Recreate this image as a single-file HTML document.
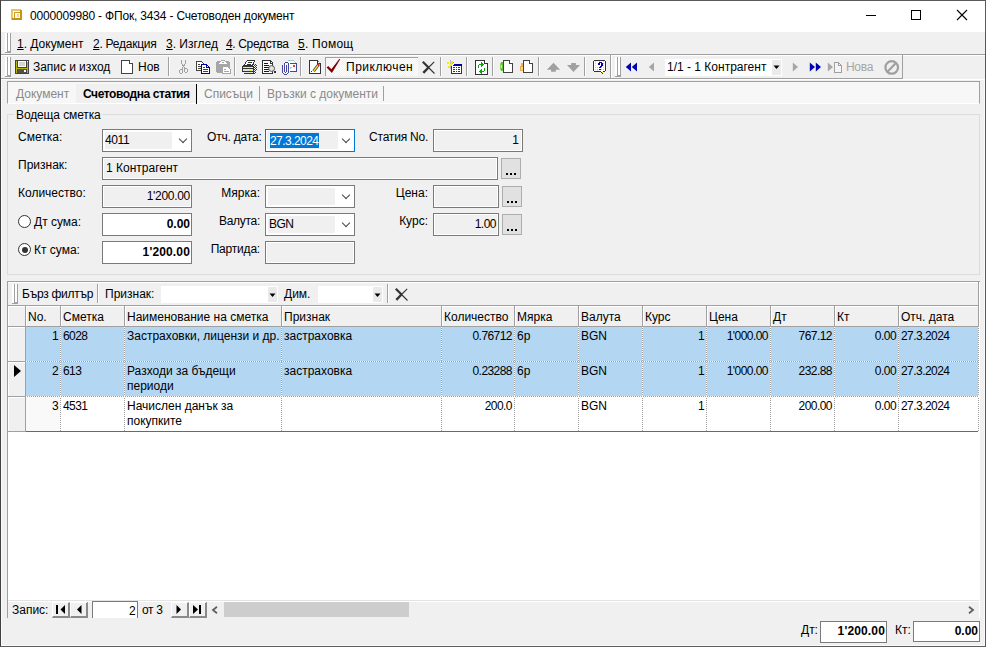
<!DOCTYPE html>
<html><head><meta charset="utf-8">
<style>
*{margin:0;padding:0;box-sizing:border-box}
html,body{width:986px;height:647px;overflow:hidden;background:#f0f0f0}
body{position:relative;font:12px/14px "Liberation Sans",sans-serif;color:#000}
.a{position:absolute}
.t{position:absolute;white-space:pre;line-height:14px}
.hl{position:absolute;height:1px}
.vl{position:absolute;width:1px}
.box{position:absolute;border:1px solid #7a7a7a;background:#fff}
.dis{position:absolute;border:1px solid #7a7a7a;background:#f0f0f0;box-shadow:inset 0 0 0 1px #fff}
.sep{position:absolute;width:2px;top:57px;height:19px;border-left:1px solid #a0a0a0;border-right:1px solid #fff}
.grip{position:absolute;width:6px;}
.grip:before{content:"";position:absolute;left:0;top:0;bottom:0;width:2px;background:#fff;border-right:1px solid #a0a0a0;width:3px;box-sizing:border-box}
.grip:after{content:"";position:absolute;left:3px;top:0;bottom:0;width:3px;background:#fff;border-right:1px solid #a0a0a0;box-sizing:border-box;border-bottom:1px solid #a0a0a0}
.grip{border-bottom:1px solid #a0a0a0}
.ell{position:absolute;width:20px;height:21px;border:1px solid #adadad;background:#e1e1e1;}
.ell:after{content:"";position:absolute;left:4px;top:14px;width:2px;height:2px;background:#000;box-shadow:4px 0 #000,8px 0 #000}
.n{letter-spacing:-0.55px}
.dot-h{background:repeating-linear-gradient(90deg,#fff 0 1px,#a0a0a0 1px 2px)}
.dot-v{background:repeating-linear-gradient(180deg,#a0a0a0 0 1px,#fff 1px 2px)}
.dot-v2{background:repeating-linear-gradient(180deg,#fff 0 1px,#a0a0a0 1px 2px)}
.nb{position:absolute;top:602px;width:18px;height:16px;border-left:1px solid #fff;border-top:1px solid #fff;border-right:2px solid #8a8a8a;border-bottom:2px solid #8a8a8a;background:#f0f0f0}
.chev{position:absolute;width:6px;height:6px;border-right:1px solid #444;border-bottom:1px solid #444;transform:rotate(45deg)}
</style></head><body>
<!-- window frame -->
<div class="a" style="left:0;top:0;width:986px;height:647px;border:1px solid #404040;border-top-color:#5a5a5a;border-right-color:#595959;border-bottom-color:#5e5e5e"></div>
<div class="vl" style="left:1px;top:32px;height:614px;background:#fafafa"></div>
<div class="vl" style="left:984px;top:80px;height:566px;background:#fafafa"></div>
<div class="hl" style="left:1px;top:645px;width:984px;background:#fafafa"></div>
<!-- title bar -->
<div class="a" style="left:1px;top:1px;width:984px;height:31px;background:#fff"></div>
<svg class="a" style="left:11px;top:9px" width="12" height="12" shape-rendering="crispEdges">
<rect x="0" y="0" width="10" height="2" fill="#e4c46c"/>
<rect x="0" y="0" width="2" height="11" fill="#e4c46c"/>
<rect x="2" y="2" width="7" height="1" fill="#fff"/>
<rect x="2" y="2" width="1" height="8" fill="#fff"/>
<rect x="3" y="3" width="7" height="1" fill="#cc9c22"/>
<rect x="3" y="3" width="1" height="7" fill="#cc9c22"/>
<rect x="4" y="4" width="5" height="5" fill="#fff"/>
<rect x="6" y="5" width="2" height="3" fill="#ead296"/>
<rect x="9" y="1" width="2" height="10" fill="#c4920e"/>
<rect x="1" y="9" width="10" height="2" fill="#c4920e"/>
</svg>
<div class="t" style="left:30px;top:9px;letter-spacing:-0.18px">0000009980 - ФПок, 3434 - Счетоводен документ</div>
<div class="a" style="left:866px;top:15px;width:10px;height:1px;background:#000"></div>
<div class="a" style="left:911px;top:10px;width:10px;height:10px;border:1px solid #000"></div>
<svg class="a" style="left:956px;top:9px" width="12" height="12"><path d="M1 1L11 11M11 1L1 11" stroke="#000" stroke-width="1.1"/></svg>

<!-- menu bar -->
<div class="a" style="left:1px;top:32px;width:984px;height:22px;background:#f0f0f0"></div>
<div class="grip" style="left:5px;top:33px;height:20px"></div>
<div class="hl" style="left:1px;top:54px;width:984px;background:#a0a0a0"></div>
<div class="hl" style="left:1px;top:55px;width:984px;background:#fff"></div>
<div class="t" style="left:17px;top:37px;"><u>1</u>. Документ</div>
<div class="t" style="left:93px;top:37px;letter-spacing:-0.25px"><u>2</u>. Редакция</div>
<div class="t" style="left:166px;top:37px;"><u>3</u>. Изглед</div>
<div class="t" style="left:226px;top:37px;letter-spacing:-0.35px"><u>4</u>. Средства</div>
<div class="t" style="left:298px;top:37px;letter-spacing:0.25px"><u>5</u>. Помощ</div>


<!-- toolbar 1 -->
<div class="grip" style="left:5px;top:57px;height:20px"></div>
<svg class="a" style="left:15px;top:60px" width="14" height="14" shape-rendering="crispEdges">
<rect x="0" y="0" width="14" height="14" fill="#424242"/>
<rect x="1" y="1" width="1" height="12" fill="#b8b800"/>
<rect x="12" y="2" width="1" height="11" fill="#b8b800"/>
<rect x="12" y="1" width="1" height="1" fill="#fff"/>
<rect x="2" y="8" width="10" height="1" fill="#b8b800"/>
<rect x="3" y="1" width="8" height="6" fill="#fafafa"/>
<rect x="4" y="2" width="6" height="4" fill="#d4d4d4"/>
<rect x="3" y="9" width="8" height="4" fill="#505050"/>
<rect x="9" y="10" width="2" height="2" fill="#fafafa"/>
</svg>
<div class="t" style="left:33px;top:60px;letter-spacing:-0.05px">Запис и изход</div>
<svg class="a" style="left:121px;top:60px" width="13" height="14" shape-rendering="crispEdges">
<path d="M0.5 0.5H8.5L11.5 3.5V13.5H0.5Z" fill="#fff" stroke="#424242"/>
<path d="M8.5 0.5V3.5H11.5" fill="none" stroke="#424242"/>
<rect x="9" y="1" width="2" height="2" fill="#fff"/>
</svg>
<div class="t" style="left:138px;top:60px;">Нов</div>
<div class="sep" style="left:168px"></div>
<svg class="a" style="left:176px;top:58px" width="16" height="18" shape-rendering="crispEdges" fill="#a0a0a0"><rect x="5" y="2" width="1" height="1"/><rect x="5" y="3" width="1" height="1"/><rect x="5" y="4" width="1" height="1"/><rect x="5" y="5" width="1" height="1"/><rect x="6" y="6" width="1" height="1"/><rect x="6" y="7" width="1" height="1"/><rect x="7" y="7" width="1" height="1"/><rect x="9" y="2" width="1" height="1"/><rect x="9" y="3" width="1" height="1"/><rect x="9" y="4" width="1" height="1"/><rect x="9" y="5" width="1" height="1"/><rect x="8" y="6" width="1" height="1"/><rect x="8" y="7" width="1" height="1"/><rect x="7" y="8" width="1" height="1"/><rect x="6" y="9" width="1" height="1"/><rect x="8" y="9" width="1" height="1"/><rect x="4" y="11" width="1" height="1"/><rect x="5" y="11" width="1" height="1"/><rect x="3" y="12" width="1" height="1"/><rect x="3" y="13" width="1" height="1"/><rect x="3" y="14" width="1" height="1"/><rect x="6" y="10" width="1" height="1"/><rect x="6" y="11" width="1" height="1"/><rect x="6" y="12" width="1" height="1"/><rect x="6" y="13" width="1" height="1"/><rect x="6" y="14" width="1" height="1"/><rect x="4" y="15" width="1" height="1"/><rect x="5" y="15" width="1" height="1"/><rect x="8" y="10" width="1" height="1"/><rect x="8" y="11" width="1" height="1"/><rect x="8" y="12" width="1" height="1"/><rect x="8" y="13" width="1" height="1"/><rect x="9" y="10" width="1" height="1"/><rect x="10" y="10" width="1" height="1"/><rect x="11" y="11" width="1" height="1"/><rect x="11" y="12" width="1" height="1"/><rect x="11" y="13" width="1" height="1"/><rect x="9" y="14" width="1" height="1"/><rect x="10" y="14" width="1" height="1"/></svg>
<svg class="a" style="left:196px;top:61px" width="15" height="14" shape-rendering="crispEdges">
<path d="M0.5 0.5H5.5L7.5 2.5V9.5H0.5Z" fill="#fff" stroke="#424242"/>
<rect x="2" y="3" width="2" height="1" fill="#424242"/><rect x="2" y="5" width="3" height="1" fill="#424242"/><rect x="2" y="7" width="3" height="1" fill="#424242"/>
<path d="M5.5 3.5H10.5L13.5 6.5V12.5H5.5Z" fill="#fff" stroke="#0000a8" stroke-width="1.4"/>
<path d="M10.5 3.5V6.5H13.5" fill="none" stroke="#0000a8" stroke-width="1.4"/>
<rect x="11" y="5" width="1" height="1" fill="#fff"/>
<rect x="7" y="6" width="2" height="1" fill="#424242"/><rect x="7" y="8" width="5" height="1" fill="#424242"/><rect x="7" y="10" width="5" height="1" fill="#424242"/>
</svg>
<svg class="a" style="left:216px;top:60px" width="16" height="15" shape-rendering="crispEdges">
<path d="M1 1H13V2H14V12H13V13H1V12H0V2H1Z" fill="#a6a6a6"/>
<rect x="5" y="0" width="4" height="1" fill="#a6a6a6"/>
<path d="M5 1H9L11 4H3Z" fill="#fff"/>
<rect x="6" y="2" width="2" height="1" fill="#a6a6a6"/>
<path d="M6.5 6.5H11.5L14.5 9.5V13.5H6.5Z" fill="#fff" stroke="#a6a6a6"/>
<rect x="8" y="9" width="2" height="1" fill="#a6a6a6"/>
<rect x="8" y="11" width="5" height="1" fill="#a6a6a6"/>
</svg>
<div class="sep" style="left:234px"></div>
<svg class="a" style="left:240px;top:58px" width="17" height="17" shape-rendering="crispEdges">
<path d="M7 2H15V4H14V6H13V8H3V7H4V6H5V4H6V3H7Z" fill="#333"/>
<path d="M7 3H14V4H13V6H12V7H5V6H6V4H7Z" fill="#fff"/>
<rect x="8" y="4" width="4" height="1" fill="#333"/><rect x="7" y="6" width="4" height="1" fill="#333"/>
<rect x="2" y="8" width="12" height="8" fill="#333"/>
<rect x="3" y="9" width="10" height="1" fill="#e6e6e6"/>
<rect x="3" y="11" width="10" height="2" fill="#e0e0e0"/>
<rect x="9" y="12" width="2" height="1" fill="#f0f000"/>
<rect x="2" y="14" width="2" height="2" fill="#f0f0f0"/>
<rect x="4" y="14" width="9" height="1" fill="#e6e6e6"/>
<rect x="13" y="6" width="1" height="1" fill="#333"/><rect x="15" y="6" width="1" height="1" fill="#333"/><rect x="14" y="7" width="1" height="1" fill="#333"/><rect x="16" y="7" width="1" height="1" fill="#333"/><rect x="13" y="8" width="1" height="1" fill="#333"/><rect x="15" y="8" width="1" height="1" fill="#333"/><rect x="14" y="9" width="1" height="1" fill="#333"/><rect x="16" y="9" width="1" height="1" fill="#333"/><rect x="15" y="10" width="1" height="1" fill="#333"/><rect x="14" y="11" width="1" height="1" fill="#333"/><rect x="16" y="11" width="1" height="1" fill="#333"/><rect x="15" y="12" width="1" height="1" fill="#333"/><rect x="14" y="13" width="1" height="1" fill="#333"/><rect x="13" y="14" width="1" height="1" fill="#333"/><rect x="15" y="14" width="1" height="1" fill="#333"/><rect x="14" y="15" width="1" height="1" fill="#333"/><rect x="14" y="8" width="1" height="1" fill="#fff"/><rect x="15" y="9" width="1" height="1" fill="#fff"/><rect x="14" y="10" width="1" height="1" fill="#fff"/><rect x="15" y="11" width="1" height="1" fill="#fff"/><rect x="14" y="12" width="1" height="1" fill="#fff"/><rect x="14" y="14" width="1" height="1" fill="#fff"/>
</svg>
<svg class="a" style="left:260px;top:58px" width="17" height="17" shape-rendering="crispEdges">
<path d="M2.5 2.5H10.5L12.5 4.5V15.5H2.5Z" fill="#fff" stroke="#333"/>
<path d="M10.5 2.5V5.5H12.5" fill="none" stroke="#333"/>
<rect x="4" y="5" width="4" height="1" fill="#0000b4"/>
<rect x="4" y="7" width="5" height="1" fill="#0000b4"/>
<rect x="4" y="9" width="5" height="1" fill="#0000b4"/>
<rect x="4" y="11" width="5" height="1" fill="#0000b4"/>
<rect x="4" y="13" width="5" height="1" fill="#0000b4"/>
<circle cx="11.6" cy="10.5" r="2.9" fill="#e4e4e4" stroke="#444" stroke-width="0.9" shape-rendering="auto"/>
<rect x="14" y="13" width="2" height="2" fill="#333"/>
</svg>
<svg class="a" style="left:280px;top:58px" width="18" height="18" shape-rendering="crispEdges">
<rect x="9" y="3" width="7" height="10" fill="#fff"/>
<rect x="8" y="2" width="6" height="1" fill="#9cd0d0"/><rect x="14" y="3" width="1" height="1" fill="#9cd0d0"/><rect x="15" y="4" width="1" height="1" fill="#9cd0d0"/>
<rect x="10" y="5" width="7" height="1" fill="#4646a0"/><rect x="16" y="5" width="1" height="9" fill="#4646a0"/><rect x="10" y="13" width="7" height="1" fill="#4646a0"/>
<rect x="13" y="7" width="2" height="2" fill="#e84020"/>
<rect x="10" y="9" width="2" height="1" fill="#9cd0d0"/><rect x="10" y="10" width="1" height="1" fill="#9cd0d0"/>
<rect x="5" y="5" width="1" height="9" fill="#fff"/>
<rect x="2" y="7" width="1" height="1" fill="#4646a0"/><rect x="2" y="8" width="1" height="1" fill="#4646a0"/><rect x="2" y="9" width="1" height="1" fill="#4646a0"/><rect x="2" y="10" width="1" height="1" fill="#4646a0"/><rect x="2" y="11" width="1" height="1" fill="#4646a0"/><rect x="2" y="12" width="1" height="1" fill="#4646a0"/><rect x="2" y="13" width="1" height="1" fill="#4646a0"/><rect x="2" y="14" width="1" height="1" fill="#4646a0"/><rect x="3" y="15" width="1" height="1" fill="#4646a0"/><rect x="4" y="16" width="1" height="1" fill="#4646a0"/><rect x="5" y="16" width="1" height="1" fill="#4646a0"/><rect x="6" y="16" width="1" height="1" fill="#4646a0"/><rect x="7" y="15" width="1" height="1" fill="#4646a0"/><rect x="8" y="5" width="1" height="1" fill="#4646a0"/><rect x="8" y="6" width="1" height="1" fill="#4646a0"/><rect x="8" y="7" width="1" height="1" fill="#4646a0"/><rect x="8" y="8" width="1" height="1" fill="#4646a0"/><rect x="8" y="9" width="1" height="1" fill="#4646a0"/><rect x="8" y="10" width="1" height="1" fill="#4646a0"/><rect x="8" y="11" width="1" height="1" fill="#4646a0"/><rect x="8" y="12" width="1" height="1" fill="#4646a0"/><rect x="8" y="13" width="1" height="1" fill="#4646a0"/><rect x="8" y="14" width="1" height="1" fill="#4646a0"/><rect x="5" y="4" width="1" height="1" fill="#4646a0"/><rect x="6" y="4" width="1" height="1" fill="#4646a0"/><rect x="7" y="4" width="1" height="1" fill="#4646a0"/><rect x="4" y="5" width="1" height="1" fill="#4646a0"/><rect x="4" y="6" width="1" height="1" fill="#4646a0"/><rect x="4" y="7" width="1" height="1" fill="#4646a0"/><rect x="4" y="8" width="1" height="1" fill="#4646a0"/><rect x="4" y="9" width="1" height="1" fill="#4646a0"/><rect x="4" y="10" width="1" height="1" fill="#4646a0"/><rect x="4" y="11" width="1" height="1" fill="#4646a0"/><rect x="4" y="12" width="1" height="1" fill="#4646a0"/><rect x="4" y="13" width="1" height="1" fill="#4646a0"/><rect x="5" y="14" width="1" height="1" fill="#4646a0"/><rect x="6" y="7" width="1" height="1" fill="#4646a0"/><rect x="6" y="8" width="1" height="1" fill="#4646a0"/><rect x="6" y="9" width="1" height="1" fill="#4646a0"/><rect x="6" y="10" width="1" height="1" fill="#4646a0"/><rect x="6" y="11" width="1" height="1" fill="#4646a0"/><rect x="6" y="12" width="1" height="1" fill="#4646a0"/><rect x="6" y="13" width="1" height="1" fill="#4646a0"/>
</svg>
<div class="sep" style="left:300px"></div>
<svg class="a" style="left:309px;top:60px" width="13" height="14">
<path d="M0.5 0.5H8.5L11.5 3.5V13.5H0.5Z" fill="#fff" stroke="#333" shape-rendering="crispEdges"/>
<path d="M8.5 0.5V3.5H11.5" fill="none" stroke="#333" shape-rendering="crispEdges"/>
<circle cx="10" cy="2.3" r="0.9" fill="#fff"/>
<path d="M4.6 11.2L9.6 4.6" stroke="#4a4a5a" stroke-width="3"/>
<path d="M4.8 10.8L9.2 5.2" stroke="#ffee00" stroke-width="1.3"/>
<path d="M8.9 5.4L10.2 3.8" stroke="#e02020" stroke-width="1.6"/>
<rect x="2" y="11" width="1" height="1" fill="#333"/>
</svg>
<div class="a" style="left:325px;top:57px;width:93px;height:19px;border-top:1px solid #a0a0a0;border-left:1px solid #a0a0a0;background-color:#fafafa;background-image:repeating-conic-gradient(#f0f0f0 0 25%,#fff 0 50%);background-size:2px 2px"></div>
<svg class="a" style="left:326px;top:59px" width="15" height="15">
<path d="M0.6 8.6L2.2 7.1L5.4 10.3L13.4 -0.2L14.1 0.5L5.9 13.9Z" fill="#800000"/>
</svg>
<div class="t" style="left:346px;top:60px;letter-spacing:0.5px">Приключен</div>
<svg class="a" style="left:421px;top:60px" width="15" height="15"><path d="M1.8 1.8L7.5 7.5" stroke="#333" stroke-width="2.2"/><path d="M7 7L13.5 13.5" stroke="#333" stroke-width="1.1"/><path d="M2.3 12.8L7.5 7.5" stroke="#333" stroke-width="2.4"/><path d="M7 8L13.2 1.8" stroke="#333" stroke-width="1.1"/></svg>
<div class="sep" style="left:440px"></div>
<svg class="a" style="left:447px;top:60px" width="16" height="15" shape-rendering="crispEdges">
<rect x="4" y="6" width="11" height="8" fill="#333"/>
<rect x="5" y="6" width="9" height="7" fill="#fff"/>
<rect x="7" y="4" width="8" height="2" fill="#0000a0"/><rect x="6" y="5" width="1" height="1" fill="#0000a0"/>
<rect x="6" y="7" width="2" height="1" fill="#333"/><rect x="9" y="7" width="1" height="1" fill="#333"/><rect x="11" y="7" width="2" height="1" fill="#333"/>
<rect x="6" y="9" width="2" height="1" fill="#333"/><rect x="9" y="9" width="1" height="1" fill="#333"/><rect x="11" y="9" width="2" height="1" fill="#333"/>
<rect x="6" y="11" width="2" height="1" fill="#333"/><rect x="9" y="11" width="1" height="1" fill="#333"/><rect x="11" y="11" width="2" height="1" fill="#333"/>
<rect x="3" y="0" width="1" height="9" fill="#b4b4c8"/>
<rect x="6" y="2" width="1" height="1" fill="#909090"/><rect x="5" y="3" width="1" height="1" fill="#b0b0b0"/>
<rect x="0" y="2" width="2" height="2" fill="#f4f000"/>
<rect x="4" y="1" width="2" height="2" fill="#f4f000"/>
<rect x="3" y="4" width="2" height="2" fill="#f4f000"/><rect x="4" y="3" width="1" height="1" fill="#f4f000"/>
<rect x="1" y="6" width="2" height="2" fill="#f4f000"/>
</svg>
<div class="sep" style="left:466px"></div>
<svg class="a" style="left:475px;top:60px" width="14" height="15" shape-rendering="crispEdges">
<path d="M0.5 0.5H9.5L12.5 3.5V14.5H0.5Z" fill="#fff" stroke="#333"/>
<path d="M9.5 0.5V3.5H12.5" fill="none" stroke="#333"/>
<rect x="10" y="1" width="2" height="2" fill="#fff"/>
<g fill="#10a010">
<rect x="3" y="5" width="1" height="3"/><rect x="4" y="4" width="1" height="1"/><rect x="5" y="4" width="3" height="1"/><rect x="6" y="2" width="1" height="5"/><rect x="7" y="3" width="1" height="3"/><rect x="8" y="4" width="1" height="1"/>
<rect x="9" y="8" width="1" height="3"/><rect x="8" y="11" width="1" height="1"/><rect x="5" y="11" width="3" height="1"/><rect x="6" y="9" width="1" height="5"/><rect x="5" y="10" width="1" height="3"/><rect x="4" y="11" width="1" height="1"/>
</g>
</svg>
<div class="sep" style="left:492px"></div>
<svg class="a" style="left:499px;top:60px" width="16" height="14" shape-rendering="crispEdges">
<rect x="1" y="3" width="1" height="7" fill="#8cd84c"/><rect x="2" y="2" width="2" height="9" fill="#5cc42c"/><rect x="2" y="5" width="1" height="3" fill="#c8f0a8"/>
<path d="M4.5 0.5H10.5L13.5 3.5V12.5H4.5Z" fill="#fff" stroke="#424242"/>
<path d="M10.5 0.5V3.5H13.5" fill="none" stroke="#424242"/>
<rect x="11" y="1" width="2" height="2" fill="#fff"/>
</svg>
<svg class="a" style="left:519px;top:60px" width="16" height="14" shape-rendering="crispEdges">
<rect x="2" y="3" width="2" height="3" fill="#f0b040"/><rect x="1" y="6" width="3" height="5" fill="#e8a860"/><rect x="2" y="7" width="2" height="3" fill="#f8e040"/>
<path d="M4.5 0.5H10.5L13.5 3.5V12.5H4.5Z" fill="#fff" stroke="#424242"/>
<path d="M10.5 0.5V3.5H13.5" fill="none" stroke="#424242"/>
<rect x="11" y="1" width="2" height="2" fill="#fff"/>
</svg>
<div class="sep" style="left:538px"></div>
<svg class="a" style="left:546px;top:62px" width="16" height="11"><path d="M7.5 0.8L14.1 7.7H9.8V9.7H5.1V7.7H0.9Z" fill="#a0a0a0"/></svg>
<svg class="a" style="left:566px;top:62px" width="16" height="11"><path d="M7.5 10L14 3H9.9V1H5.2V3H1Z" fill="#a0a0a0"/></svg>
<div class="sep" style="left:584px"></div>
<svg class="a" style="left:593px;top:60px" width="14" height="16" shape-rendering="crispEdges">
<path d="M1 0H12V1H13V11H12V12H10V14H9V13H8V12H1V11H0V1H1Z" fill="#333"/>
<rect x="1" y="1" width="11" height="10" fill="#fff"/>
<rect x="8" y="11" width="2" height="1" fill="#fff"/>
<g fill="#f0e000"><rect x="2" y="1" width="1" height="1"/><rect x="2" y="3" width="1" height="1"/><rect x="2" y="5" width="1" height="1"/><rect x="2" y="7" width="1" height="1"/><rect x="2" y="9" width="1" height="1"/><rect x="4" y="7" width="1" height="1"/><rect x="4" y="9" width="1" height="1"/><rect x="4" y="10" width="1" height="1"/><rect x="6" y="1" width="1" height="1"/><rect x="8" y="7" width="1" height="1"/><rect x="8" y="9" width="1" height="1"/><rect x="10" y="1" width="1" height="1"/><rect x="10" y="3" width="1" height="1"/><rect x="10" y="5" width="1" height="1"/><rect x="10" y="7" width="1" height="1"/><rect x="10" y="9" width="1" height="1"/><rect x="9" y="12" width="1" height="1"/></g>
<g fill="#0000b0">
<rect x="6" y="2" width="3" height="1"/><rect x="5" y="3" width="2" height="2"/><rect x="8" y="3" width="2" height="3"/><rect x="7" y="6" width="2" height="1"/><rect x="6" y="7" width="2" height="1"/><rect x="6" y="9" width="2" height="1"/>
</g>
</svg>
<div class="vl" style="left:610px;top:55px;height:23px;background:#a0a0a0"></div>
<!-- toolbar 2 -->
<div class="a" style="left:611px;top:55px;width:292px;height:23px;border-right:1px solid #a0a0a0;border-left:1px solid #fff"></div>
<div class="grip" style="left:615px;top:57px;height:20px"></div>
<svg class="a" style="left:625px;top:62px" width="13" height="11"><path d="M6 0.5V9.5L0.8 5ZM12 0.5V9.5L6.8 5Z" fill="#0000b4"/></svg>
<svg class="a" style="left:648px;top:62px" width="7" height="11"><path d="M6 0.5V9.5L0.8 5Z" fill="#a6a6a6"/></svg>
<div class="a" style="left:665px;top:59px;width:117px;height:17px;background:#fff"></div>
<div class="a" style="left:772px;top:60px;width:9px;height:15px;background:#eaeaea"></div>
<svg class="a" style="left:773px;top:65px" width="7" height="5"><path d="M0.5 0.5H6.5L3.5 4Z" fill="#000"/></svg>
<div class="t" style="left:667px;top:60px;">1/1 - 1 Контрагент</div>
<svg class="a" style="left:792px;top:62px" width="7" height="11"><path d="M0.8 0.5V9.5L6 5Z" fill="#a6a6a6"/></svg>
<svg class="a" style="left:809px;top:62px" width="13" height="11"><path d="M0.8 0.5V9.5L6 5ZM6.8 0.5V9.5L12 5Z" fill="#0000b4"/></svg>
<svg class="a" style="left:827px;top:62px" width="16" height="12" shape-rendering="crispEdges">
<path d="M0.8 0.5V9.5L6 5Z" fill="#a6a6a6" shape-rendering="auto"/>
<path d="M7.5 0.5H11.5L14.5 3.5V10.5H7.5Z" fill="#f4f4f4" stroke="#a0a0a0"/><path d="M11.5 0.5V3.5H14.5" fill="none" stroke="#a0a0a0"/>
</svg>
<div class="t" style="left:846px;top:60px;color:#a6a6a6;letter-spacing:-0.3px">Нова</div>
<svg class="a" style="left:884px;top:60px" width="16" height="16">
<circle cx="7.7" cy="7.4" r="6.3" fill="none" stroke="#a0a0a0" stroke-width="2.2"/>
<path d="M3 12.2L12.4 2.6" stroke="#a0a0a0" stroke-width="2.2"/>

</svg>

<!-- toolbar bottom -->
<div class="hl" style="left:1px;top:78px;width:902px;background:#a0a0a0"></div>
<div class="hl" style="left:1px;top:79px;width:984px;background:#fff"></div>

<!-- tab control -->
<div class="a" style="left:7px;top:81px;width:973px;height:23px;border:1px solid #a0a0a0;border-bottom:1px solid #fff;background:#f7f7f7"></div>
<div class="a" style="left:76px;top:84px;width:120px;height:19px;background:#f0f0f0"></div>
<div class="vl" style="left:196px;top:84px;height:20px;background:#000"></div>
<div class="t" style="left:16px;top:87px;color:#8a8a8a">Документ</div>
<div class="t" style="left:83px;top:87px;font-weight:bold;letter-spacing:-0.42px">Счетоводна статия</div>
<div class="t" style="left:204px;top:87px;color:#8a8a8a">Списъци</div>
<div class="vl" style="left:259px;top:86px;height:15px;background:#a0a0a0"></div>
<div class="t" style="left:267px;top:87px;color:#8a8a8a">Връзки с документи</div>
<div class="vl" style="left:383px;top:86px;height:15px;background:#a0a0a0"></div>

<!-- group box -->
<div class="a" style="left:7px;top:114px;width:973px;height:161px;border:1px solid #dcdcdc"></div>
<div class="a" style="left:14px;top:106px;width:88px;height:16px;background:#f0f0f0"></div>
<div class="t" style="left:16px;top:108px;letter-spacing:-0.12px">Водеща сметка</div>


<!-- form rows -->
<div class="t" style="left:18px;top:130px;">Сметка:</div>
<div class="box" style="left:102px;top:129px;width:90px;height:23px"></div>
<div class="a" style="left:105px;top:132px;width:67px;height:17px;background:#f0f0f0"></div>
<div class="t" style="left:105px;top:133px;letter-spacing:-0.4px">4011</div>
<div class="chev" style="left:180px;top:136px"></div>
<div class="t" style="left:207px;top:130px;letter-spacing:-0.2px">Отч. дата:</div>
<div class="box" style="left:265px;top:129px;width:90px;height:23px;border-color:#0078d7"></div>
<div class="a" style="left:267px;top:131px;width:71px;height:18px;background:#f0f0f0"></div>
<div class="a" style="left:270px;top:133px;width:49px;height:15px;background:#0078d7"></div>
<div class="t" style="left:270px;top:134px;color:#fff;letter-spacing:-0.55px">27.3.2024</div>
<div class="chev" style="left:343px;top:136px"></div>
<div class="t" style="left:369px;top:130px;letter-spacing:-0.2px">Статия No.</div>
<div class="dis" style="left:433px;top:129px;width:90px;height:23px"></div>
<div class="t" style="left:433px;top:133px;width:86px;text-align:right">1</div>

<div class="t" style="left:18px;top:158px;">Признак:</div>
<div class="dis" style="left:102px;top:157px;width:396px;height:23px"></div>
<div class="t" style="left:106px;top:161px;">1 Контрагент</div>
<div class="ell" style="left:501px;top:158px"></div>

<div class="t" style="left:18px;top:186px;">Количество:</div>
<div class="dis" style="left:102px;top:185px;width:90px;height:23px"></div>
<div class="t" style="left:102px;top:189px;width:88px;text-align:right;letter-spacing:-0.3px">1'200.00</div>
<div class="t" style="left:200px;top:186px;width:60px;text-align:right">Мярка:</div>
<div class="box" style="left:265px;top:185px;width:90px;height:23px"></div>
<div class="a" style="left:268px;top:188px;width:67px;height:17px;background:#f0f0f0"></div>
<div class="chev" style="left:343px;top:192px"></div>
<div class="t" style="left:368px;top:186px;width:60px;text-align:right">Цена:</div>
<div class="dis" style="left:433px;top:185px;width:66px;height:23px"></div>
<div class="ell" style="left:502px;top:186px"></div>

<div class="a" style="left:18px;top:215px;width:13px;height:13px;border:1px solid #333;border-radius:50%;background:#fff"></div>
<div class="t" style="left:34px;top:215px;">Дт сума:</div>
<div class="box" style="left:102px;top:213px;width:90px;height:23px"></div>
<div class="t" style="left:102px;top:217px;width:88px;text-align:right;font-weight:bold">0.00</div>
<div class="t" style="left:200px;top:214px;width:60px;text-align:right;letter-spacing:-0.3px">Валута:</div>
<div class="box" style="left:265px;top:213px;width:90px;height:23px"></div>
<div class="a" style="left:268px;top:216px;width:67px;height:17px;background:#f0f0f0"></div>
<div class="t" style="left:269px;top:217px;letter-spacing:-0.5px">BGN</div>
<div class="chev" style="left:343px;top:220px"></div>
<div class="t" style="left:368px;top:214px;width:60px;text-align:right">Курс:</div>
<div class="dis" style="left:433px;top:213px;width:66px;height:23px"></div>
<div class="t" style="left:433px;top:217px;width:63px;text-align:right;letter-spacing:-0.5px">1.00</div>
<div class="ell" style="left:502px;top:214px"></div>

<div class="a" style="left:18px;top:243px;width:13px;height:13px;border:1px solid #333;border-radius:50%;background:#fff"></div>
<div class="a" style="left:21.5px;top:246.5px;width:6px;height:6px;border-radius:50%;background:#333"></div>
<div class="t" style="left:34px;top:243px;">Кт сума:</div>
<div class="box" style="left:102px;top:241px;width:90px;height:23px"></div>
<div class="t" style="left:102px;top:245px;width:88px;text-align:right;font-weight:bold;letter-spacing:0.15px">1'200.00</div>
<div class="t" style="left:200px;top:242px;width:60px;text-align:right;letter-spacing:-0.2px">Партида:</div>
<div class="dis" style="left:265px;top:241px;width:90px;height:23px"></div>

<!-- GRID START -->
<div class="a" style="left:7px;top:281px;width:973px;height:337px;background:#fff;border-top:1px solid #a0a0a0;border-left:1px solid #a0a0a0"></div>
<div class="vl" style="left:978px;top:281px;height:46px;background:#a0a0a0"></div>
<div class="a" style="left:8px;top:282px;width:970px;height:23px;background:#f0f0f0;border-top:1px solid #fff"></div>
<div class="grip" style="left:12px;top:284px;height:20px"></div>
<div class="t" style="left:22px;top:287px;letter-spacing:-0.25px">Бърз филтър</div>
<div class="sep" style="left:97px;top:284px;height:19px"></div>
<div class="t" style="left:105px;top:287px;">Признак:</div>
<div class="a" style="left:161px;top:286px;width:117px;height:17px;background:#fff"></div>
<div class="a" style="left:268px;top:287px;width:9px;height:15px;background:#eaeaea"></div>
<svg class="a" style="left:269px;top:293px" width="7" height="5"><path d="M0.5 0.5H6.5L3.5 4Z" fill="#000"/></svg>
<div class="t" style="left:284px;top:287px;">Дим.</div>
<div class="a" style="left:318px;top:286px;width:65px;height:17px;background:#fff"></div>
<div class="a" style="left:373px;top:287px;width:9px;height:15px;background:#eaeaea"></div>
<svg class="a" style="left:374px;top:293px" width="7" height="5"><path d="M0.5 0.5H6.5L3.5 4Z" fill="#000"/></svg>
<div class="sep" style="left:387px;top:284px;height:19px"></div>
<svg class="a" style="left:394px;top:287px" width="15" height="15"><path d="M1.8 1.8L7.5 7.5" stroke="#333" stroke-width="2.2"/><path d="M7 7L13.5 13.5" stroke="#333" stroke-width="1.1"/><path d="M2.3 12.8L7.5 7.5" stroke="#333" stroke-width="2.4"/><path d="M7 8L13.2 1.8" stroke="#333" stroke-width="1.1"/></svg>
<div class="hl" style="left:8px;top:305px;width:970px;background:#a0a0a0"></div>
<div class="hl" style="left:8px;top:326px;width:970px;background:#a0a0a0"></div>
<div class="a" style="left:8px;top:306px;width:970px;height:20px;background:#f0f0f0;border-top:1px solid #fff"></div>
<div class="vl" style="left:25px;top:306px;height:20px;background:#a0a0a0"></div>
<div class="vl" style="left:8px;top:306px;height:20px;background:#fff"></div>
<div class="vl" style="left:60px;top:306px;height:20px;background:#a0a0a0"></div>
<div class="vl" style="left:26px;top:306px;height:20px;background:#fff"></div>
<div class="t" style="left:28px;top:310px;">No.</div>
<div class="vl" style="left:124px;top:306px;height:20px;background:#a0a0a0"></div>
<div class="vl" style="left:61px;top:306px;height:20px;background:#fff"></div>
<div class="t" style="left:63px;top:310px;">Сметка</div>
<div class="vl" style="left:281px;top:306px;height:20px;background:#a0a0a0"></div>
<div class="vl" style="left:125px;top:306px;height:20px;background:#fff"></div>
<div class="t" style="left:127px;top:310px;">Наименование на сметка</div>
<div class="vl" style="left:441px;top:306px;height:20px;background:#a0a0a0"></div>
<div class="vl" style="left:282px;top:306px;height:20px;background:#fff"></div>
<div class="t" style="left:284px;top:310px;">Признак</div>
<div class="vl" style="left:514px;top:306px;height:20px;background:#a0a0a0"></div>
<div class="vl" style="left:442px;top:306px;height:20px;background:#fff"></div>
<div class="t" style="left:444px;top:310px;">Количество</div>
<div class="vl" style="left:578px;top:306px;height:20px;background:#a0a0a0"></div>
<div class="vl" style="left:515px;top:306px;height:20px;background:#fff"></div>
<div class="t" style="left:517px;top:310px;">Мярка</div>
<div class="vl" style="left:642px;top:306px;height:20px;background:#a0a0a0"></div>
<div class="vl" style="left:579px;top:306px;height:20px;background:#fff"></div>
<div class="t" style="left:581px;top:310px;">Валута</div>
<div class="vl" style="left:706px;top:306px;height:20px;background:#a0a0a0"></div>
<div class="vl" style="left:643px;top:306px;height:20px;background:#fff"></div>
<div class="t" style="left:645px;top:310px;">Курс</div>
<div class="vl" style="left:770px;top:306px;height:20px;background:#a0a0a0"></div>
<div class="vl" style="left:707px;top:306px;height:20px;background:#fff"></div>
<div class="t" style="left:709px;top:310px;">Цена</div>
<div class="vl" style="left:834px;top:306px;height:20px;background:#a0a0a0"></div>
<div class="vl" style="left:771px;top:306px;height:20px;background:#fff"></div>
<div class="t" style="left:773px;top:310px;">Дт</div>
<div class="vl" style="left:898px;top:306px;height:20px;background:#a0a0a0"></div>
<div class="vl" style="left:835px;top:306px;height:20px;background:#fff"></div>
<div class="t" style="left:837px;top:310px;">Кт</div>
<div class="vl" style="left:978px;top:306px;height:20px;background:#a0a0a0"></div>
<div class="vl" style="left:899px;top:306px;height:20px;background:#fff"></div>
<div class="t" style="left:901px;top:310px;">Отч. дата</div>
<div class="a" style="left:8px;top:327px;width:17px;height:34px;background:#f0f0f0;border-top:1px solid #fff;border-left:1px solid #fff"></div>
<div class="hl" style="left:8px;top:361px;width:17px;background:#a0a0a0"></div>
<div class="vl" style="left:25px;top:327px;height:35px;background:#a0a0a0"></div>
<div class="a" style="left:26px;top:327px;width:952px;height:34px;background:#b3d7f3"></div>
<div class="hl dot-h" style="left:26px;top:361px;width:952px"></div>
<div class="vl dot-v2" style="left:60px;top:327px;height:34px"></div>
<div class="t n" style="left:26px;width:32px;text-align:right;top:329px;line-height:15px;">1</div>
<div class="vl dot-v2" style="left:124px;top:327px;height:34px"></div>
<div class="t n" style="left:63px;top:329px;line-height:15px;">6028</div>
<div class="vl dot-v2" style="left:281px;top:327px;height:34px"></div>
<div class="t" style="left:127px;top:329px;line-height:15px;">Застраховки, лицензи и др.</div>
<div class="vl dot-v2" style="left:441px;top:327px;height:34px"></div>
<div class="t" style="left:284px;top:329px;line-height:15px;">застраховка</div>
<div class="vl dot-v2" style="left:514px;top:327px;height:34px"></div>
<div class="t n" style="left:442px;width:70px;text-align:right;top:329px;line-height:15px;">0.76712</div>
<div class="vl dot-v2" style="left:578px;top:327px;height:34px"></div>
<div class="t" style="left:517px;top:329px;line-height:15px;">6р</div>
<div class="vl dot-v2" style="left:642px;top:327px;height:34px"></div>
<div class="t" style="left:581px;top:329px;line-height:15px;">BGN</div>
<div class="vl dot-v2" style="left:706px;top:327px;height:34px"></div>
<div class="t n" style="left:643px;width:61px;text-align:right;top:329px;line-height:15px;">1</div>
<div class="vl dot-v2" style="left:770px;top:327px;height:34px"></div>
<div class="t n" style="left:707px;width:61px;text-align:right;top:329px;line-height:15px;">1'000.00</div>
<div class="vl dot-v2" style="left:834px;top:327px;height:34px"></div>
<div class="t n" style="left:771px;width:61px;text-align:right;top:329px;line-height:15px;">767.12</div>
<div class="vl dot-v2" style="left:898px;top:327px;height:34px"></div>
<div class="t n" style="left:835px;width:61px;text-align:right;top:329px;line-height:15px;">0.00</div>
<div class="vl dot-v2" style="left:978px;top:327px;height:34px"></div>
<div class="t n" style="left:901px;top:329px;line-height:15px;">27.3.2024</div>
<div class="a" style="left:8px;top:362px;width:17px;height:34px;background:#f0f0f0;border-top:1px solid #fff;border-left:1px solid #fff"></div>
<div class="hl" style="left:8px;top:396px;width:17px;background:#a0a0a0"></div>
<div class="vl" style="left:25px;top:362px;height:35px;background:#a0a0a0"></div>
<div class="a" style="left:26px;top:362px;width:952px;height:34px;background:#b3d7f3"></div>
<div class="hl dot-h" style="left:26px;top:396px;width:952px"></div>
<div class="vl dot-v" style="left:60px;top:362px;height:34px"></div>
<div class="t n" style="left:26px;width:32px;text-align:right;top:364px;line-height:15px;">2</div>
<div class="vl dot-v" style="left:124px;top:362px;height:34px"></div>
<div class="t n" style="left:63px;top:364px;line-height:15px;">613</div>
<div class="vl dot-v" style="left:281px;top:362px;height:34px"></div>
<div class="t" style="left:127px;top:364px;line-height:15px;">Разходи за бъдещи<br>периоди</div>
<div class="vl dot-v" style="left:441px;top:362px;height:34px"></div>
<div class="t" style="left:284px;top:364px;line-height:15px;">застраховка</div>
<div class="vl dot-v" style="left:514px;top:362px;height:34px"></div>
<div class="t n" style="left:442px;width:70px;text-align:right;top:364px;line-height:15px;">0.23288</div>
<div class="vl dot-v" style="left:578px;top:362px;height:34px"></div>
<div class="t" style="left:517px;top:364px;line-height:15px;">6р</div>
<div class="vl dot-v" style="left:642px;top:362px;height:34px"></div>
<div class="t" style="left:581px;top:364px;line-height:15px;">BGN</div>
<div class="vl dot-v" style="left:706px;top:362px;height:34px"></div>
<div class="t n" style="left:643px;width:61px;text-align:right;top:364px;line-height:15px;">1</div>
<div class="vl dot-v" style="left:770px;top:362px;height:34px"></div>
<div class="t n" style="left:707px;width:61px;text-align:right;top:364px;line-height:15px;">1'000.00</div>
<div class="vl dot-v" style="left:834px;top:362px;height:34px"></div>
<div class="t n" style="left:771px;width:61px;text-align:right;top:364px;line-height:15px;">232.88</div>
<div class="vl dot-v" style="left:898px;top:362px;height:34px"></div>
<div class="t n" style="left:835px;width:61px;text-align:right;top:364px;line-height:15px;">0.00</div>
<div class="vl dot-v" style="left:978px;top:362px;height:34px"></div>
<div class="t n" style="left:901px;top:364px;line-height:15px;">27.3.2024</div>
<div class="a" style="left:8px;top:397px;width:17px;height:34px;background:#f0f0f0;border-top:1px solid #fff;border-left:1px solid #fff"></div>
<div class="hl" style="left:8px;top:431px;width:17px;background:#a0a0a0"></div>
<div class="vl" style="left:25px;top:397px;height:35px;background:#a0a0a0"></div>
<div class="a" style="left:26px;top:397px;width:952px;height:34px;background:#fff"></div>
<div class="a" style="left:26px;top:397px;width:34px;height:34px;background:#f9f9f9"></div>
<div class="hl" style="left:26px;top:431px;width:952px;background:#696969"></div>
<div class="vl dot-v2" style="left:60px;top:397px;height:34px"></div>
<div class="t n" style="left:26px;width:32px;text-align:right;top:399px;line-height:15px;">3</div>
<div class="vl dot-v2" style="left:124px;top:397px;height:34px"></div>
<div class="t n" style="left:63px;top:399px;line-height:15px;">4531</div>
<div class="vl dot-v2" style="left:281px;top:397px;height:34px"></div>
<div class="t" style="left:127px;top:399px;line-height:15px;">Начислен данък за<br>покупките</div>
<div class="vl dot-v2" style="left:441px;top:397px;height:34px"></div>
<div class="vl dot-v2" style="left:514px;top:397px;height:34px"></div>
<div class="t n" style="left:442px;width:70px;text-align:right;top:399px;line-height:15px;">200.0</div>
<div class="vl dot-v2" style="left:578px;top:397px;height:34px"></div>
<div class="vl dot-v2" style="left:642px;top:397px;height:34px"></div>
<div class="t" style="left:581px;top:399px;line-height:15px;">BGN</div>
<div class="vl dot-v2" style="left:706px;top:397px;height:34px"></div>
<div class="t n" style="left:643px;width:61px;text-align:right;top:399px;line-height:15px;">1</div>
<div class="vl dot-v2" style="left:770px;top:397px;height:34px"></div>
<div class="vl dot-v2" style="left:834px;top:397px;height:34px"></div>
<div class="t n" style="left:771px;width:61px;text-align:right;top:399px;line-height:15px;">200.00</div>
<div class="vl dot-v2" style="left:898px;top:397px;height:34px"></div>
<div class="t n" style="left:835px;width:61px;text-align:right;top:399px;line-height:15px;">0.00</div>
<div class="vl dot-v2" style="left:978px;top:397px;height:34px"></div>
<div class="t n" style="left:901px;top:399px;line-height:15px;">27.3.2024</div>
<svg class="a" style="left:14px;top:365px" width="7" height="12"><path d="M0 0V12L7 6Z" fill="#000"/></svg>
<!-- GRID END -->

<!-- BOTTOM START -->
<div class="a" style="left:8px;top:600px;width:971px;height:18px;background:#f0f0f0;border-top:1px solid #e3e3e3"></div>
<div class="hl" style="left:8px;top:601px;width:971px;background:#fff"></div>
<div class="vl" style="left:7px;top:600px;height:18px;background:#a0a0a0"></div>
<div class="t" style="left:12px;top:603px;">Запис:</div>
<div class="nb" style="left:52px"></div>
<div class="nb" style="left:70px"></div>
<svg class="a" style="left:56px;top:605px" width="10" height="9" shape-rendering="crispEdges"><rect x="0" y="0" width="2" height="9" fill="#000"/><path d="M9 0V9L4.5 4.5Z" fill="#000" shape-rendering="auto"/></svg>
<svg class="a" style="left:76px;top:605px" width="6" height="9"><path d="M5.5 0V9L1 4.5Z" fill="#000"/></svg>
<div class="a" style="left:92px;top:601px;width:46px;height:17px;background:#fff;border:1px solid #7a7a7a;border-bottom:none"></div>
<div class="t n" style="left:92px;top:604px;width:43px;text-align:right">2</div>
<div class="t" style="left:142px;top:603px;letter-spacing:-0.3px">от 3</div>
<div class="nb" style="left:171px"></div>
<div class="nb" style="left:189px"></div>
<svg class="a" style="left:176px;top:605px" width="6" height="9"><path d="M0.5 0V9L5 4.5Z" fill="#000"/></svg>
<svg class="a" style="left:193px;top:605px" width="10" height="9" shape-rendering="crispEdges"><path d="M0 0V9L5 4.5Z" fill="#000" shape-rendering="auto"/><rect x="6" y="0" width="2" height="9" fill="#000"/></svg>
<svg class="a" style="left:211px;top:606px" width="8" height="8"><path d="M6 0.8L2 4L6 7.2" fill="none" stroke="#606060" stroke-width="1.8"/></svg>
<div class="a" style="left:224px;top:602px;width:185px;height:15px;background:#cdcdcd"></div>
<svg class="a" style="left:967px;top:606px" width="8" height="8"><path d="M2 0.8L6 4L2 7.2" fill="none" stroke="#606060" stroke-width="1.8"/></svg>
<div class="t" style="left:801px;top:623px;">Дт:</div>
<div class="box" style="left:820px;top:621px;width:67px;height:22px"></div>
<div class="t" style="left:820px;top:624px;width:65px;text-align:right;font-weight:bold;letter-spacing:0.15px">1'200.00</div>
<div class="t" style="left:895px;top:623px;">Кт:</div>
<div class="box" style="left:913px;top:621px;width:67px;height:21px"></div>
<div class="t" style="left:913px;top:624px;width:65px;text-align:right;font-weight:bold">0.00</div>
<!-- BOTTOM END -->

</body></html>
